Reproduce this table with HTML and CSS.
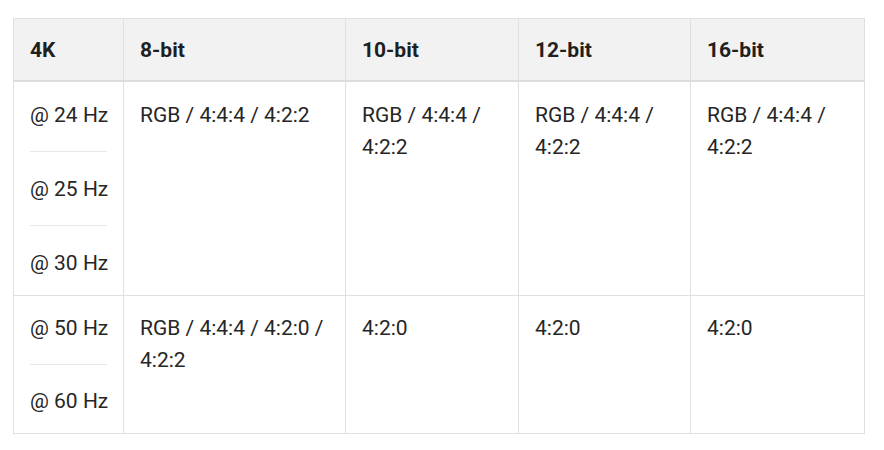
FILE: index.html
```html
<!DOCTYPE html>
<html lang="en">
<head>
<meta charset="utf-8">
<title>4K chroma table</title>
<link rel="stylesheet" href="styles.css">
</head>
<body>
<table class="spec">
  <colgroup>
    <col class="c1"><col class="c2"><col class="c3"><col class="c4"><col class="c5">
  </colgroup>
  <thead>
    <tr><th>4K</th><th>8-bit</th><th>10-bit</th><th>12-bit</th><th>16-bit</th></tr>
  </thead>
  <tbody>
    <tr class="r1">
      <td class="rates"><div class="rate">@ 24 Hz</div><div class="rate">@ 25 Hz</div><div class="rate">@ 30 Hz</div></td>
      <td>RGB / 4:4:4 / 4:2:2</td>
      <td>RGB / 4:4:4 / 4:2:2</td>
      <td>RGB / 4:4:4 / 4:2:2</td>
      <td>RGB / 4:4:4 / 4:2:2</td>
    </tr>
    <tr class="r2">
      <td class="rates"><div class="rate">@ 50 Hz</div><div class="rate">@ 60 Hz</div></td>
      <td>RGB / 4:4:4 / 4:2:0 / 4:2:2</td>
      <td>4:2:0</td>
      <td>4:2:0</td>
      <td>4:2:0</td>
    </tr>
  </tbody>
</table>
</body>
</html>
```
FILE: styles.css
```css
html, body {
  margin: 0;
  padding: 0;
  background: #ffffff;
}
body {
  padding: 18px 0 0 13px;
  font-family: Roboto, "Liberation Sans", sans-serif;
  font-size: 21px;
  line-height: 32px;
  color: #262626;
}
.spec {
  border-collapse: collapse;
  table-layout: fixed;
  width: 851px;
}
.c1 { width: 110px; }
.c2 { width: 222px; }
.c3 { width: 173px; }
.c4 { width: 172px; }
.c5 { width: 174px; }
.spec th,
.spec td {
  border: 1px solid #e0e0e0;
  text-align: left;
  vertical-align: top;
  padding: 16px 16px 16px 16px;
}
.spec th {
  background: #f2f2f2;
  color: #1f1f1f;
  font-weight: 700;
  padding-top: 15px;
  padding-bottom: 14px;
  border-bottom: 2px solid #dcdcdc;
}
.spec .r1 td { padding-top: 17px; }
.rate {
  white-space: nowrap;
}
.rate + .rate {
  border-top: 1px solid #e8e8e8;
}
.r1 .rate { padding: 21px 0 20px; }
.r2 .rate { padding: 20px 0 20px; }
.rate:first-child { padding-top: 0; }
.rate:last-child { padding-bottom: 0; }
```
